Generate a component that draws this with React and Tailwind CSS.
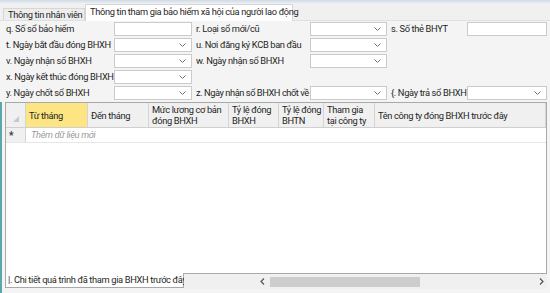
import React from "react";

const Chev = () => (
  <svg width="7" height="4" viewBox="0 0 7 4" className="shrink-0">
    <path d="M0.5 0.5 L3.5 3.5 L6.5 0.5" fill="none" stroke="#707070" strokeWidth="1" />
  </svg>
);

const Combo = () => (
  <div className="h-[14px] bg-white border border-[#cbcbcb] flex items-center justify-end pr-[5px]">
    <Chev />
  </div>
);
const Text = () => <div className="h-[14px] bg-white border border-[#cbcbcb]" />;
const Label = ({ children, className = "" }) => (
  <div className={"h-[14px] flex items-center whitespace-nowrap " + className}>{children}</div>
);
const Empty = () => <div className="h-[14px]" />;

const headers = [
  { t: "Từ tháng", w: "w-[62px]", sel: true },
  { t: "Đến tháng", w: "w-[61px]" },
  { t: ["Mức lương cơ bản", "đóng BHXH"], w: "w-[80px]" },
  { t: ["Tỷ lệ đóng", "BHXH"], w: "w-[50px]" },
  { t: ["Tỷ lệ đóng", "BHTN"], w: "w-[45px]" },
  { t: ["Tham gia", "tại công ty"], w: "w-[51px]" },
  { t: "Tên công ty đóng BHXH trước đây", w: "flex-1" },
];

export default function App() {
  return (
    <div
      className="w-[550px] h-[293px] bg-[#f0f0f0] text-[#1f1f1f] text-[9.3px] tracking-[-0.35px] flex flex-col overflow-hidden"
      style={{ fontFamily: "Roboto, 'Liberation Sans', sans-serif" }}
    >
      {/* top band */}
      <div className="h-[3px] bg-gradient-to-b from-[#cfdbe8] to-[#e6ebf0] shrink-0" />
      {/* tab strip */}
      <div className="h-[18px] flex items-end pl-[3px] shrink-0 border-b border-[#e0e0e0]">
        <div className="h-[12px] w-[82px] px-[4px] flex items-center border border-b-0 border-[#d6d6d6] bg-[#ededed] leading-none whitespace-nowrap">
          Thông tin nhân viên
        </div>
        <div className="h-[17px] w-[208px] px-[4px] flex items-center bg-white border border-b-0 border-[#d6d6d6] -mb-px leading-none pb-[2px] whitespace-nowrap">
          Thông tin tham gia bảo hiểm xã hội của người lao động
        </div>
      </div>

      {/* form */}
      <div className="flex-1 flex flex-col bg-[#f4f4f4] border-l-2 border-transparent">
        <div className="grid grid-cols-[108px_78px_118px_77px_80px_80px] gap-y-[2px] pt-[1px] pl-[4px] pr-[1px]">
          <Label>q. Số sổ bảo hiểm</Label>
          <Text />
          <Label className="pl-[4px]">r. Loại sổ mới/cũ</Label>
          <Combo />
          <Label className="pl-[4px]">s. Số thẻ BHYT</Label>
          <Text />

          <Label>t. Ngày bắt đầu đóng BHXH</Label>
          <Combo />
          <Label className="pl-[4px]">u. Nơi đăng ký KCB ban đầu</Label>
          <Combo />
          <Empty />
          <Empty />

          <Label>v. Ngày nhận sổ BHXH</Label>
          <Combo />
          <Label className="pl-[4px]">w. Ngày nhận sổ BHXH</Label>
          <Combo />
          <Empty />
          <Empty />

          <Label>x. Ngày kết thúc đóng BHXH</Label>
          <Combo />
          <Empty />
          <Empty />
          <Empty />
          <Empty />

          <Label>y. Ngày chốt sổ BHXH</Label>
          <Combo />
          <Label className="pl-[4px] tracking-[-0.45px]">z. Ngày nhận sổ BHXH chốt về</Label>
          <Combo />
          <Label className="pl-[4px]">{"{. Ngày trả sổ BHXH"}</Label>
          <Combo />
        </div>

        {/* grid area with teal left edge */}
        <div className="flex-1 flex flex-col -ml-[2px] border-l-2 border-[#5aa8a8] mt-[2px] pl-[3px] pr-[3px]">
          <div className="flex-1 flex flex-col bg-white border border-[#a9a9a9]">
            {/* header */}
            <div className="h-[25px] flex bg-[#f0f0f0] border-b border-[#cfcfcf] shrink-0">
              <div className="w-[20px] border-r border-[#d4d4d4] flex items-end justify-center pb-[5px]">
                <svg width="6" height="6" viewBox="0 0 6 6">
                  <path d="M6 0 L6 6 L0 6 Z" fill="#c8c8c8" />
                </svg>
              </div>
              {headers.map((h, i) => (
                <div
                  key={i}
                  className={
                    h.w +
                    " shrink-0 border-r border-[#d4d4d4] flex flex-col justify-center px-[3px] leading-[11px] overflow-hidden " +
                    (h.sel ? "bg-[#fde583]" : "")
                  }
                >
                  {Array.isArray(h.t) ? (
                    h.t.map((l, j) => (
                      <div key={j} className="whitespace-nowrap">
                        {l}
                      </div>
                    ))
                  ) : (
                    <div className="whitespace-nowrap">{h.t}</div>
                  )}
                </div>
              ))}
            </div>
            {/* new row */}
            <div className="h-[15px] flex border-b border-[#e6e6e6] shrink-0">
              <div className="w-[20px] bg-[#f0f0f0] border-r border-[#d4d4d4] flex items-center pl-[3px] text-[10px] font-bold text-[#333]">
                *
              </div>
              <div className="flex-1 flex items-center pl-[5px] italic text-[#9a9a9a]">Thêm dữ liệu mới</div>
            </div>
            <div className="flex-1" />
          </div>
          {/* bottom tab + scrollbar */}
          <div className="h-[15px] flex shrink-0">
            <div className="h-[15px] w-[179px] px-[2px] flex items-center bg-white border border-t-0 border-[#a9a9a9] -mt-px leading-none whitespace-nowrap">
              |. Chi tiết quá trình đã tham gia BHXH trước đây
            </div>
            <div className="flex-1 flex items-center bg-[#f0f0f0] -mt-px border-t border-[#a9a9a9]">
              <div className="w-[83px] flex justify-end pr-[2px]">
                <svg width="5" height="7" viewBox="0 0 5 7">
                  <path d="M4 0.5 L1 3.5 L4 6.5" fill="none" stroke="#555" strokeWidth="1.2" />
                </svg>
              </div>
              <div className="w-[150px] h-[10px] bg-[#cdcdcd] ml-[3px]" />
              <div className="flex-1 flex justify-end pr-[3px]">
                <svg width="5" height="7" viewBox="0 0 5 7">
                  <path d="M1 0.5 L4 3.5 L1 6.5" fill="none" stroke="#555" strokeWidth="1.2" />
                </svg>
              </div>
            </div>
          </div>
          <div className="h-[4px] shrink-0" />
        </div>
      </div>
    </div>
  );
}
